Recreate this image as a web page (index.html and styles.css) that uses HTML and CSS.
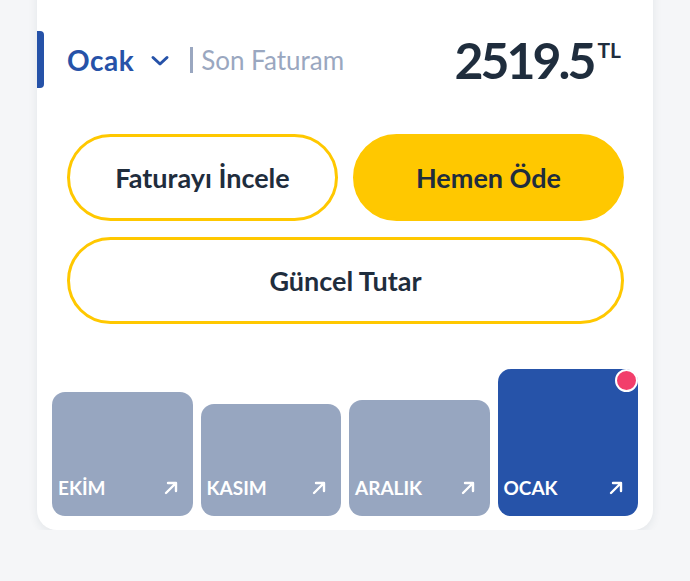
FILE: index.html
```html
<!DOCTYPE html>
<html lang="tr">
<head>
    <meta charset="UTF-8">
    <meta name="viewport" content="width=device-width, initial-scale=1.0">
    <title>Son Faturam</title>
    <link rel="stylesheet" href="styles.css">
</head>
<body>
    <div class="bill-card">
        <div class="bill-header">
            <span class="active-bar"></span>
            <div class="month-select">
                <span class="month-name">Ocak</span>
                <svg class="chevron" width="20" height="12" viewBox="0 0 20 12">
                    <path d="M3 2.5 L10 9 L17 2.5" fill="none" stroke="#2652a8" stroke-width="3" stroke-linecap="round" stroke-linejoin="round"/>
                </svg>
            </div>
            <span class="divider"></span>
            <span class="bill-label">Son Faturam</span>
            <div class="amount">2519.5<sup>TL</sup></div>
        </div>

        <div class="actions">
            <div class="action-row">
                <button class="btn btn-outline">Faturayı İncele</button>
                <button class="btn btn-fill">Hemen Öde</button>
            </div>
            <button class="btn btn-outline">Güncel Tutar</button>
        </div>

        <div class="months">
            <div class="month-tile" style="height: 124px">
                <span>EKİM</span>
                <svg width="16" height="16" viewBox="0 0 16 16"><path d="M3 13 L13 3 M5 3 H13 V11" fill="none" stroke="#fff" stroke-width="2.4" stroke-linecap="round" stroke-linejoin="round"/></svg>
            </div>
            <div class="month-tile" style="height: 112px">
                <span>KASIM</span>
                <svg width="16" height="16" viewBox="0 0 16 16"><path d="M3 13 L13 3 M5 3 H13 V11" fill="none" stroke="#fff" stroke-width="2.4" stroke-linecap="round" stroke-linejoin="round"/></svg>
            </div>
            <div class="month-tile" style="height: 116px">
                <span>ARALIK</span>
                <svg width="16" height="16" viewBox="0 0 16 16"><path d="M3 13 L13 3 M5 3 H13 V11" fill="none" stroke="#fff" stroke-width="2.4" stroke-linecap="round" stroke-linejoin="round"/></svg>
            </div>
            <div class="month-tile current" style="height: 147px">
                <span class="dot"></span>
                <span>OCAK</span>
                <svg width="16" height="16" viewBox="0 0 16 16"><path d="M3 13 L13 3 M5 3 H13 V11" fill="none" stroke="#fff" stroke-width="2.4" stroke-linecap="round" stroke-linejoin="round"/></svg>
            </div>
        </div>
    </div>
</body>
</html>
```

FILE: styles.css
```css
body {
    margin: 0;
    background-color: #f5f6f8;
    font-family: 'Lato', 'Open Sans', sans-serif;
    color: #1f2d3d;
}

.bill-card {
    width: 616px;
    margin: -30px 0 0 37px;
    padding: 61px 0 14px;
    background-color: #fff;
    border-radius: 20px;
    box-shadow: 0 3px 10px rgba(30, 45, 70, 0.08);
    box-sizing: border-box;
}

.bill-header {
    display: flex;
    align-items: center;
    height: 57px;
    padding-right: 32px;
}

.active-bar {
    width: 7px;
    height: 57px;
    background-color: #2652a8;
    border-radius: 0 4px 4px 0;
    margin-right: 23px;
}

.month-select {
    display: flex;
    align-items: center;
    gap: 16px;
}

.month-name {
    font-size: 28px;
    font-weight: 700;
    letter-spacing: 0.5px;
    color: #2652a8;
}

.chevron {
    margin-top: 2px;
}

.divider {
    width: 3px;
    height: 26px;
    background-color: #9aa7c0;
    margin: 0 8px 0 20px;
}

.bill-label {
    font-size: 26px;
    color: #9aa7c0;
}

.amount {
    margin-left: auto;
    font-size: 50px;
    font-weight: 700;
    letter-spacing: -3px;
    color: #1f2d3d;
}

.amount sup {
    font-size: 21px;
    letter-spacing: 0;
    vertical-align: 21px;
    margin-left: 4px;
}

.actions {
    display: flex;
    flex-direction: column;
    gap: 16px;
    padding: 46px 29px 0 30px;
}

.action-row {
    display: flex;
    gap: 15px;
}

.action-row .btn {
    flex: 1;
}

.btn {
    height: 87px;
    border-radius: 44px;
    border: 3px solid #ffc800;
    background-color: #fff;
    font-family: inherit;
    font-size: 27px;
    font-weight: 700;
    color: #1f2d3d;
    cursor: pointer;
}

.btn-fill {
    background-color: #ffc800;
}

.months {
    display: flex;
    align-items: flex-end;
    gap: 8px;
    height: 147px;
    margin-top: 45px;
    padding: 0 15px;
}

.month-tile {
    position: relative;
    flex: 1;
    display: flex;
    align-items: flex-end;
    justify-content: space-between;
    padding: 0 14px 19px 6px;
    background-color: #97a6c0;
    border-radius: 13px;
    color: #fff;
    font-size: 19px;
    font-weight: 700;
    box-sizing: border-box;
}

.month-tile span {
    line-height: 1;
}

.month-tile svg {
    margin-bottom: 1px;
}

.month-tile.current {
    background-color: #2653a9;
}

.dot {
    position: absolute;
    top: 0;
    right: 0;
    width: 19px;
    height: 19px;
    background-color: #f23e6b;
    border: 2px solid #fff;
    border-radius: 50%;
}
```
